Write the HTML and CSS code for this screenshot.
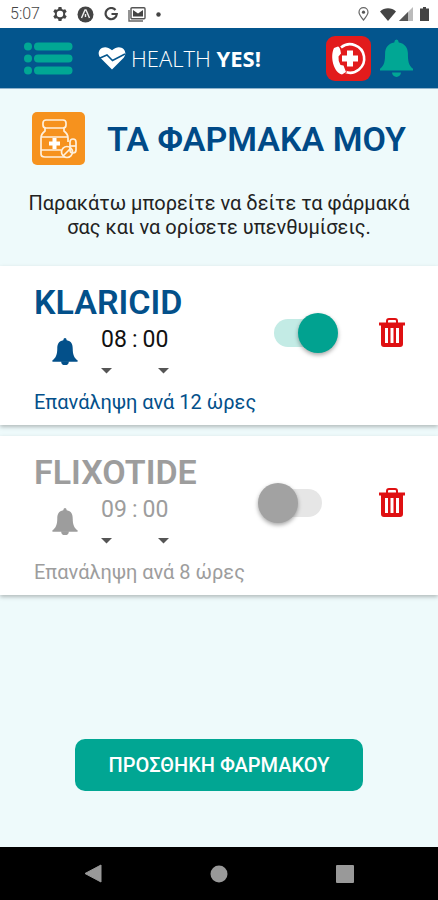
FILE: index.html
```html
<!DOCTYPE html>
<html lang="el">
<head>
    <meta charset="UTF-8">
    <meta name="viewport" content="width=device-width, initial-scale=1.0">
    <title>Health Yes! - Τα φάρμακά μου</title>
    <link rel="stylesheet" href="styles.css">
</head>
<body>
    <div class="status-bar">
        <span class="clock">5:07</span>
        <svg width="14" height="14" viewBox="0 0 24 24"><path fill="#444" fill-rule="evenodd" d="M9.500 0h5l.7 3.500 2.400 1.400 3.400-1.200 2.500 4.300-2.700 2.400v3.200l2.700 2.400-2.500 4.300-3.400-1.200-2.400 1.400-.7 3.500h-5l-.7-3.500-2.400-1.400-3.400 1.200L.5 16l2.700-2.400v-3.200L.5 8 3 3.700l3.400 1.200 2.400-1.400zM12 6.500a5.500 5.500 0 1 0 0 11 5.500 5.500 0 0 0 0-11z"/></svg>
        <svg width="17" height="17" viewBox="0 0 17 17"><circle cx="8.500" cy="8.500" r="8" fill="#444"/><path d="M4.500 12 8 4h1l3.500 8M8.500 8v3" fill="none" stroke="#eee" stroke-width="1.400"/></svg>
        <svg width="14" height="14" viewBox="0 0 14 14"><path d="M11.500 3A5.600 5.600 0 1 0 12.800 7H7.500" fill="none" stroke="#444" stroke-width="2.200"/></svg>
        <svg width="18" height="15" viewBox="0 0 18 15"><path d="M1 3v11h14" fill="none" stroke="#666" stroke-width="1.400"/><rect x="3" y="0.700" width="14" height="11" rx="1" fill="#fff" stroke="#555" stroke-width="1.400"/><path d="M5 9.500V3l5 3.500L15 3v6.500z" fill="#444"/></svg>
        <svg class="dot" width="5" height="5" viewBox="0 0 5 5"><circle cx="2.500" cy="2.500" r="2.200" fill="#444"/></svg>
        <div class="status-right">
            <svg width="11" height="14" viewBox="0 0 11 14"><path d="M5.500 13C3 10 1 7.500 1 5.200a4.500 4.500 0 0 1 9 0C10 7.500 8 10 5.500 13z" fill="none" stroke="#666" stroke-width="1.200"/><circle cx="5.500" cy="5.200" r="1.600" fill="#555"/></svg>
            <svg class="wifi" width="16" height="13" viewBox="0 0 16 13"><path d="M8 13 0 3.500C4.500-.8 11.500-.8 16 3.500z" fill="#444"/></svg>
            <svg width="14" height="14" viewBox="0 0 14 14"><path d="M0 14 14 0v14z" fill="#bbb"/><path d="M0 14 9 5v9z" fill="#555"/></svg>
            <svg class="battery" width="9" height="14" viewBox="0 0 9 14"><path d="M3 0h3v1.500h3V14H0V1.500h3z" fill="#444"/></svg>
        </div>
    </div>

    <header class="app-bar">
        <button class="icon-button" aria-label="Μενού">
            <svg width="49" height="33" viewBox="0 0 49 33" fill="#01a794"><circle cx="4" cy="4.500" r="4"/><circle cx="4" cy="16.500" r="4"/><circle cx="4" cy="28.500" r="4"/><rect x="10" y="0.500" width="38.500" height="8" rx="4"/><rect x="10" y="12.500" width="38.500" height="8" rx="4"/><rect x="10" y="24.500" width="38.500" height="8" rx="4"/></svg>
        </button>
        <div class="logo">
            <svg width="28" height="24" viewBox="0 0 28 24"><path d="M14 23.500 2.300 11.800C-3 5 5.500-3.500 14 4.200 22.500-3.500 31 5 25.700 11.800z" fill="#fff"/><path d="M2 12 9 9l5.500 5.500L27 8" fill="none" stroke="#03558d" stroke-width="1.500"/></svg>
            <span class="logo-text">HEALTH <b>YES!</b></span>
        </div>
        <div class="app-actions">
            <button class="icon-button" aria-label="Κλήση βοήθειας">
                <svg width="45" height="45" viewBox="0 0 45 45"><rect width="45" height="45" rx="9" fill="#e21b1c"/><path d="M15 11.500A14.200 14.200 0 1 1 19 35.800" fill="none" stroke="#fff" stroke-width="2.600"/><path d="M8 12 12 10.500Q14 10.500 15 17.500L12.500 20.500Q12 25 14.500 29L17.500 29.500 20 36 16 38.500C8 37 3.500 21 8 12z" fill="#fff" stroke="#e21b1c" stroke-width="1.500" paint-order="stroke"/><path d="M21 14.500h6v5h5v6h-5v5h-6v-5h-5v-6h5z" fill="#fff"/></svg>
            </button>
            <button class="icon-button" aria-label="Ειδοποιήσεις">
                <svg width="33" height="39" viewBox="0 0 26 30" fill="#01a794"><path d="M13 0Q14.500 0 14.800 2.300C19.500 3 22 6.500 22 11c0 6 .5 9.500 4 12v1.500H0V23c3.500-2.500 4-6 4-12 0-4.500 2.500-8 7.200-8.700Q11.500 0 13 0z"/><path d="M9.500 26h7a3.500 3.500 0 0 1-7 0z"/></svg>
            </button>
        </div>
    </header>

    <main class="content">
        <div class="page-title">
            <svg width="53" height="53" viewBox="0 0 53 53"><rect width="53" height="53" rx="5" fill="#f6921e"/><g fill="none" stroke="#fff0dc" stroke-width="1.700" stroke-linejoin="round"><rect x="11" y="8" width="23" height="8" rx="3"/><path d="M13 16v3q-4 3-4 7v16q0 3 4 3h19M32 16v3q4 3 4 7v4M9 25h27M9 38h20"/><circle cx="35" cy="40" r="5.500"/><path d="M31 44l8-8"/><rect x="38" y="27" width="6" height="14" rx="3"/><path d="M38 34h6"/></g><path d="M20.500 26h4v3.500H28v4h-3.500V37h-4v-3.500H17v-4h3.500z" fill="#fff"/></svg>
            <h1>ΤΑ ΦΑΡΜΑΚΑ ΜΟΥ</h1>
        </div>
        <p class="intro">Παρακάτω μπορείτε να δείτε τα φάρμακά σας και να ορίσετε υπενθυμίσεις.</p>

        <div class="medicine-list">
            <section class="medicine">
                <div class="info">
                    <h2>KLARICID</h2>
                    <div class="reminder">
                        <svg class="bell" width="26" height="29" viewBox="0 0 26 30" fill="currentColor"><path d="M13 0Q14.500 0 14.800 2.300C19.500 3 21 6.500 21 11c0 6 1.500 9.500 5 12v1.500H0V23c3.500-2.500 5-6 5-12 0-4.500 1.500-8 6.200-8.700Q11.500 0 13 0z"/><path d="M9 24h8a4 4 0 0 1-8 0z"/></svg>
                        <div class="time">
                            <label class="hour">
                                <select aria-label="Ώρα"><option>08</option><option>20</option></select>
                                <svg width="11" height="6" viewBox="0 0 11 6"><path d="M0 0h11L5.500 5.500z" fill="#555"/></svg>
                            </label>
                            <span>:</span>
                            <label class="minute">
                                <select aria-label="Λεπτά"><option>00</option><option>30</option></select>
                                <svg width="11" height="6" viewBox="0 0 11 6"><path d="M0 0h11L5.500 5.500z" fill="#555"/></svg>
                            </label>
                        </div>
                    </div>
                    <p class="repeat">Επανάληψη ανά 12 ώρες</p>
                </div>
                <input class="switch" type="checkbox" aria-label="Υπενθύμιση KLARICID" checked>
                <button class="icon-button" aria-label="Διαγραφή KLARICID">
                    <svg width="26" height="29" viewBox="0 0 26 29"><path d="M8 5V3q0-2 2-2h6q2 0 2 2v2" fill="none" stroke="#df1012" stroke-width="2"/><path d="M0 4.500h26v3h-2V26q0 3-3 3H5q-3 0-3-3V7.500H0z" fill="#df1012"/><path d="M6 10h3v15H6zM11.500 10h3v15h-3zM17 10h3v15h-3z" fill="#fff"/></svg>
                </button>
            </section>

            <section class="medicine inactive">
                <div class="info">
                    <h2>FLIXOTIDE</h2>
                    <div class="reminder">
                        <svg class="bell" width="26" height="29" viewBox="0 0 26 30" fill="currentColor"><path d="M13 0Q14.500 0 14.800 2.300C19.500 3 21 6.500 21 11c0 6 1.500 9.500 5 12v1.500H0V23c3.500-2.500 5-6 5-12 0-4.500 1.500-8 6.200-8.700Q11.500 0 13 0z"/><path d="M9 24h8a4 4 0 0 1-8 0z"/></svg>
                        <div class="time">
                            <label class="hour">
                                <select aria-label="Ώρα"><option>09</option><option>21</option></select>
                                <svg width="11" height="6" viewBox="0 0 11 6"><path d="M0 0h11L5.500 5.500z" fill="#555"/></svg>
                            </label>
                            <span>:</span>
                            <label class="minute">
                                <select aria-label="Λεπτά"><option>00</option><option>30</option></select>
                                <svg width="11" height="6" viewBox="0 0 11 6"><path d="M0 0h11L5.500 5.500z" fill="#555"/></svg>
                            </label>
                        </div>
                    </div>
                    <p class="repeat">Επανάληψη ανά 8 ώρες</p>
                </div>
                <input class="switch" type="checkbox" aria-label="Υπενθύμιση FLIXOTIDE">
                <button class="icon-button" aria-label="Διαγραφή FLIXOTIDE">
                    <svg width="26" height="29" viewBox="0 0 26 29"><path d="M8 5V3q0-2 2-2h6q2 0 2 2v2" fill="none" stroke="#df1012" stroke-width="2"/><path d="M0 4.500h26v3h-2V26q0 3-3 3H5q-3 0-3-3V7.500H0z" fill="#df1012"/><path d="M6 10h3v15H6zM11.500 10h3v15h-3zM17 10h3v15h-3z" fill="#fff"/></svg>
                </button>
            </section>
        </div>

        <button class="add-button">ΠΡΟΣΘΗΚΗ ΦΑΡΜΑΚΟΥ</button>
    </main>

    <nav class="system-nav">
        <button class="icon-button" aria-label="Πίσω"><svg width="18" height="19" viewBox="0 0 18 19"><path d="M17 1v17L1 9.500z" fill="#999" stroke="#999" stroke-linejoin="round"/></svg></button>
        <button class="icon-button" aria-label="Αρχική"><svg width="18" height="18" viewBox="0 0 18 18"><circle cx="9" cy="9" r="8.500" fill="#999"/></svg></button>
        <button class="icon-button" aria-label="Πρόσφατα"><svg width="18" height="18" viewBox="0 0 18 18"><rect width="18" height="18" rx="1" fill="#999"/></svg></button>
    </nav>
</body>
</html>
```
FILE: styles.css
```css
* {
    box-sizing: border-box;
}
body {
    margin: 0;
    min-height: 100vh;
    display: flex;
    flex-direction: column;
    font-family: Roboto, "Liberation Sans", sans-serif;
    background-color: #eefafb;
    color: #222;
}
svg {
    display: block;
    flex-shrink: 0;
}
h1, h2, p {
    margin: 0;
}
.icon-button {
    padding: 0;
    border: none;
    background: none;
    cursor: pointer;
}

/* status bar */
.status-bar {
    display: flex;
    align-items: center;
    gap: 10px;
    height: 28px;
    padding: 0 9px 0 10px;
    background: #fff;
}
.clock {
    width: 33px;
    font-size: 16px;
    font-weight: 300;
    line-height: 28px;
    color: #444;
}
.status-right {
    display: flex;
    align-items: center;
    gap: 3px;
    margin-left: auto;
}
.wifi {
    margin-left: 8px;
}
.battery {
    margin-left: 4px;
}

/* top bar */
.app-bar {
    display: flex;
    align-items: center;
    height: 61px;
    padding: 0 25px 0 24px;
    background-color: #03558d;
    border-bottom: 1px solid #8fb3cc;
}
.logo {
    display: flex;
    align-items: center;
    gap: 5px;
    margin-left: 25px;
    color: #fff;
}
.logo-text {
    font-family: "Open Sans", sans-serif;
    font-size: 22px;
    font-weight: 300;
    line-height: 28px;
    white-space: nowrap;
}
.logo-text b {
    font-weight: 700;
}
.app-actions {
    display: flex;
    align-items: center;
    gap: 9px;
    margin-left: auto;
}

/* page */
.content {
    flex: 1;
    display: flex;
    flex-direction: column;
    align-items: center;
    padding: 23px 0 56px;
}
.page-title {
    display: flex;
    align-items: center;
    justify-content: center;
    gap: 22px;
}
h1 {
    font-size: 34px;
    font-weight: 600;
    line-height: 40px;
    color: #004a87;
}
.intro {
    max-width: 438px;
    margin-top: 26px;
    padding: 0 24px;
    font-size: 20px;
    line-height: 24px;
    text-align: center;
}
.medicine-list {
    align-self: stretch;
    display: flex;
    flex-direction: column;
    gap: 11px;
    margin: 27px 0;
}
.medicine {
    display: flex;
    align-items: flex-start;
    padding: 16px 33px 11px 34px;
    background: #fff;
    box-shadow: 0 2px 4px rgba(0, 0, 0, 0.25);
    color: #03508a;
}
.info {
    flex: 1;
}
h2 {
    font-size: 34px;
    font-weight: 600;
    line-height: 40px;
}
.reminder {
    display: flex;
    gap: 23px;
    padding: 4px 0 16px 18px;
}
.bell {
    margin-top: 12px;
}
.time {
    display: flex;
    gap: 5px;
    font-size: 23px;
    line-height: 28px;
    color: #111;
}
.time label {
    display: flex;
    flex-direction: column;
    gap: 14px;
}
.time .minute {
    align-items: flex-end;
}
.time select {
    appearance: none;
    height: 28px;
    padding: 0;
    border: none;
    background: none;
    font: inherit;
    color: inherit;
}
.repeat {
    font-size: 20px;
    line-height: 24px;
    white-space: nowrap;
}
.inactive,
.inactive .time {
    color: #9d9d9d;
}
.medicine .icon-button {
    margin: 36px 0 0 41px;
}

/* reminder switch */
.switch {
    appearance: none;
    position: relative;
    flex-shrink: 0;
    width: 80px;
    height: 40px;
    margin: 31px 0 0;
    cursor: pointer;
}
.switch::before {
    content: "";
    position: absolute;
    inset: 6px 16px;
    border-radius: 14px;
    background: #e6e6e6;
}
.switch::after {
    content: "";
    position: absolute;
    top: 0;
    left: 0;
    width: 40px;
    height: 40px;
    border-radius: 50%;
    background: #a2a2a2;
    box-shadow: 0 2px 4px rgba(0, 0, 0, 0.35);
}
.switch:checked::before {
    background: #c3ebe5;
}
.switch:checked::after {
    left: auto;
    right: 0;
    background: #01a290;
}

.add-button {
    margin-top: auto;
    padding: 14px 34px;
    border: none;
    border-radius: 10px;
    background-color: #01a693;
    color: #fff;
    font-family: inherit;
    font-size: 20px;
    font-weight: 500;
    line-height: 24px;
    cursor: pointer;
}

.system-nav {
    display: flex;
    justify-content: space-between;
    align-items: center;
    height: 53px;
    padding: 0 84px;
    background: #000;
}
```
